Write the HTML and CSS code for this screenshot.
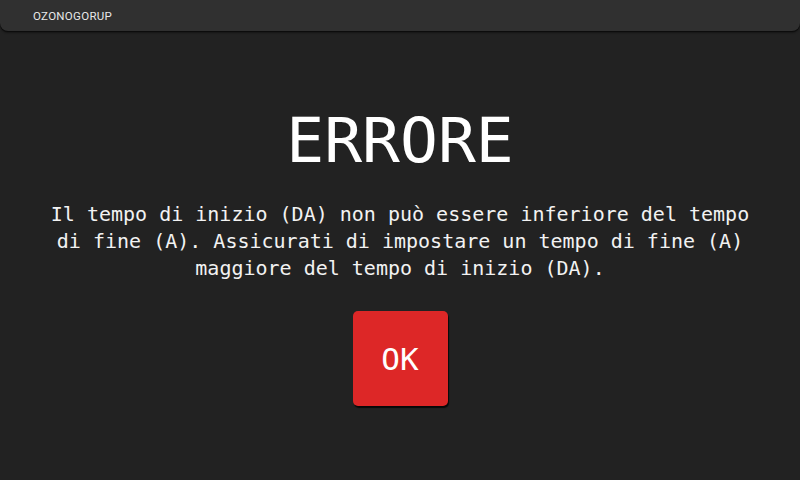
FILE: index.html
```html
<!DOCTYPE html>
<html lang="it">
<head>
<meta charset="utf-8">
<title>Errore</title>
<link rel="stylesheet" href="styles.css">
</head>
<body>
<header class="topbar">
  <span class="brand">OZONOGORUP</span>
</header>
<main class="dialog">
  <h1 class="title">ERRORE</h1>
  <p class="message">Il tempo di inizio (DA) non può essere inferiore del tempo di fine (A). Assicurati di impostare un tempo di fine (A) maggiore del tempo di inizio (DA).</p>
  <button class="ok-btn" type="button">OK</button>
</main>
</body>
</html>
```

FILE: styles.css
```css
html, body {
  margin: 0;
  padding: 0;
  width: 800px;
  height: 480px;
  background: #222222;
  overflow: hidden;
}

body {
  font-family: "DejaVu Sans Mono", "Liberation Mono", monospace;
  color: #ffffff;
}

.topbar {
  height: 31px;
  background: #303030;
  border-radius: 0 0 8px 8px;
  box-shadow: 0 1px 0 #0c0c0c, 0 2px 2px rgba(0,0,0,0.4);
  display: flex;
  align-items: center;
  padding-left: 33px;
}

.brand {
  font-family: Roboto, "Liberation Sans", sans-serif;
  font-size: 11.5px;
  color: #e8e8e8;
  letter-spacing: 0.3px;
}

.dialog {
  display: flex;
  flex-direction: column;
  align-items: center;
  padding-top: 78px;
}

.title {
  margin: 0;
  font-family: "DejaVu Sans Mono", monospace;
  font-weight: normal;
  font-size: 63px;
  line-height: 64px;
  letter-spacing: 0;
}

.message {
  margin: 28px 0 0 0;
  width: 712px;
  text-align: center;
  font-size: 20px;
  line-height: 27px;
  color: #f2f2f2;
}

.ok-btn {
  margin-top: 29px;
  width: 95px;
  height: 95px;
  border: none;
  border-radius: 5px;
  background: #dd2727;
  color: #ffffff;
  font-family: "DejaVu Sans Mono", monospace;
  font-size: 31px;
  box-shadow: 1px 2px 1px rgba(0,0,0,0.75);
  padding: 0;
}
```
